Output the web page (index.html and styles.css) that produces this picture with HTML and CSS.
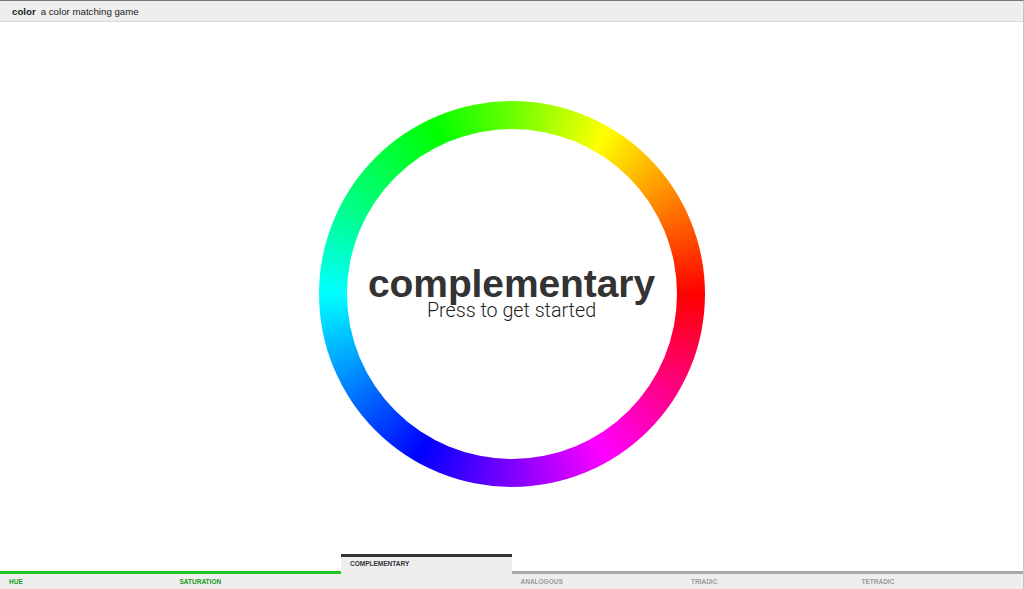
FILE: index.html
```html
<!DOCTYPE html>
<html>
<head>
<meta charset="utf-8">
<title>color</title>
<link rel="stylesheet" href="styles.css">
</head>
<body>
<div class="app">
  <header class="topbar">
    <span class="brand">color</span>
    <span class="tagline">a color matching game</span>
  </header>
  <main class="stage">
    <div class="ring">
      <div class="ring-inner">
        <div class="title">complementary</div>
        <div class="subtitle">Press to get started</div>
      </div>
    </div>
  </main>
  <nav class="levels">
    <div class="level done">HUE</div>
    <div class="level done">SATURATION</div>
    <div class="level active">COMPLEMENTARY</div>
    <div class="level todo">ANALOGOUS</div>
    <div class="level todo">TRIADIC</div>
    <div class="level todo">TETRADIC</div>
  </nav>
</div>
</body>
</html>
```

FILE: styles.css
```css
html, body {
  margin: 0;
  padding: 0;
  height: 100%;
  background: #fff;
}

.app {
  height: 100%;
  box-sizing: border-box;
  display: flex;
  flex-direction: column;
  border-top: 1px solid #7a7a7a;
  border-right: 1px solid #c4c4c4;
  font-family: "Liberation Sans", Arial, sans-serif;
  overflow: hidden;
}

.topbar {
  height: 21px;
  box-sizing: border-box;
  background: #eeeeee;
  border-bottom: 1px solid #dcdcdc;
  display: flex;
  align-items: center;
  padding-left: 12px;
  font-size: 9.7px;
  color: #222;
}

.brand {
  font-weight: bold;
  margin-right: 5px;
}

.stage {
  flex: 1;
  display: flex;
  align-items: center;
  justify-content: center;
  padding-top: 12px;
}

.ring {
  width: 386px;
  height: 386px;
  border-radius: 50%;
  background: conic-gradient(from 0deg,
    hsl(95, 100%, 50%) 0deg,
    hsl(60, 100%, 50%) 30deg,
    hsl(30, 100%, 50%) 60deg,
    hsl(0, 100%, 50%) 90deg,
    hsl(330, 100%, 50%) 120deg,
    hsl(300, 100%, 50%) 150deg,
    hsl(270, 100%, 50%) 180deg,
    hsl(240, 100%, 50%) 210deg,
    hsl(210, 100%, 50%) 240deg,
    hsl(180, 100%, 50%) 270deg,
    hsl(150, 100%, 50%) 300deg,
    hsl(120, 100%, 50%) 335deg,
    hsl(95, 100%, 50%) 360deg);
  display: flex;
  align-items: center;
  justify-content: center;
}

.ring-inner {
  width: 330px;
  height: 330px;
  border-radius: 50%;
  background: #fff;
  display: flex;
  flex-direction: column;
  align-items: center;
  justify-content: center;
  color: #333;
}

.title {
  font-family: "Liberation Sans", Arial, sans-serif;
  font-weight: bold;
  font-size: 39px;
  line-height: 34px;
  letter-spacing: -0.1px;
}

.subtitle {
  font-family: Roboto, "Liberation Sans", sans-serif;
  font-weight: 300;
  font-size: 19.7px;
  line-height: 20px;
  color: #222;
}

.levels {
  height: 35px;
  display: grid;
  grid-template-columns: repeat(6, 1fr);
  align-items: end;
}

.level {
  background: #eeeeee;
  box-sizing: border-box;
  height: 18px;
  border-top: 3px solid #aaaaaa;
  padding: 4px 0 0 9px;
  font-size: 6.5px;
  line-height: 8px;
  font-weight: bold;
  color: #9a9a9a;
}

.level.done {
  border-top-color: #1fc41f;
  color: #1a9a1a;
}

.level.active {
  height: 35px;
  border-top-color: #333;
  color: #333;
  padding-top: 3px;
}
```
